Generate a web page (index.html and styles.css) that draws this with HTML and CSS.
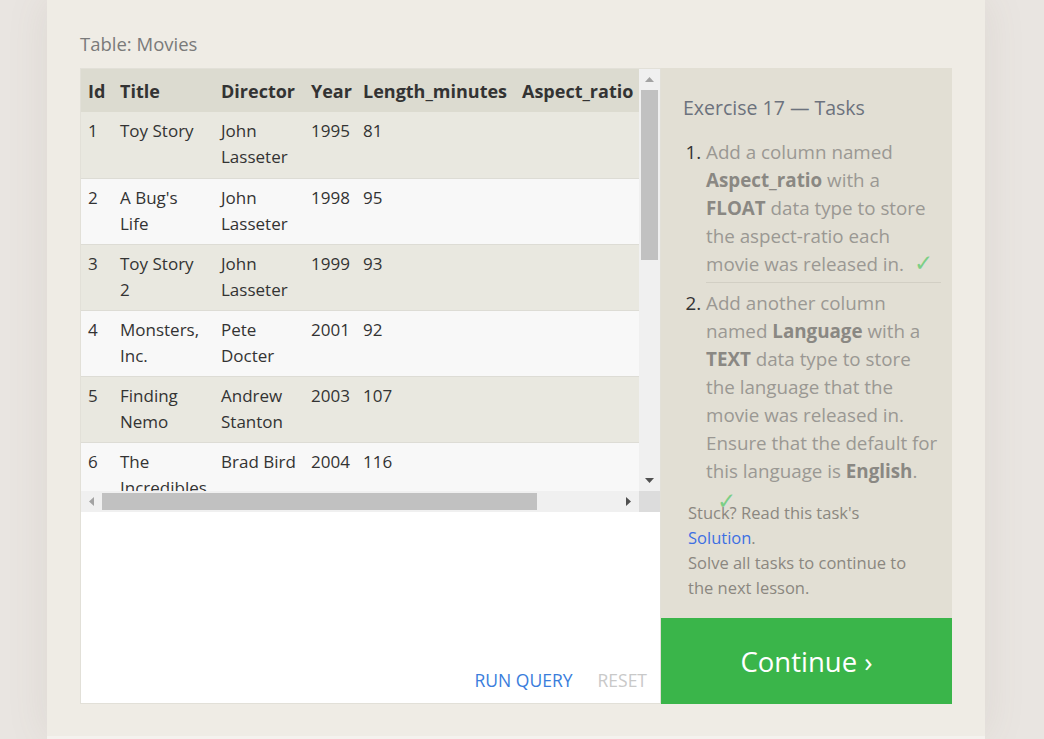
FILE: index.html
```html
<!DOCTYPE html>
<html lang="en">
<head>
<meta charset="utf-8">
<title>Exercise 17</title>
<link rel="stylesheet" href="styles.css">
</head>
<body>
<div class="page">
  <div class="card">
    <div class="label">Table: Movies</div>
    <div class="workspace">
      <div class="left">
        <div class="results">
          <div class="viewport">
            <table class="movies">
              <colgroup>
                <col class="c-id"><col class="c-title"><col class="c-dir"><col class="c-year"><col class="c-len"><col class="c-asp">
              </colgroup>
              <thead>
                <tr><th>Id</th><th>Title</th><th>Director</th><th>Year</th><th>Length_minutes</th><th>Aspect_ratio</th></tr>
              </thead>
              <tbody>
                <tr><td>1</td><td class="t">Toy Story</td><td>John Lasseter</td><td>1995</td><td>81</td><td></td></tr>
                <tr><td>2</td><td class="t">A Bug's Life</td><td>John Lasseter</td><td>1998</td><td>95</td><td></td></tr>
                <tr><td>3</td><td class="t">Toy Story 2</td><td>John Lasseter</td><td>1999</td><td>93</td><td></td></tr>
                <tr><td>4</td><td class="t">Monsters, Inc.</td><td>Pete Docter</td><td>2001</td><td>92</td><td></td></tr>
                <tr><td>5</td><td class="t">Finding Nemo</td><td>Andrew Stanton</td><td>2003</td><td>107</td><td></td></tr>
                <tr><td>6</td><td class="t">The Incredibles</td><td>Brad Bird</td><td>2004</td><td>116</td><td></td></tr>
              </tbody>
            </table>
          </div>
          <div class="vscroll">
            <div class="arrow"><svg width="9" height="5" viewBox="0 0 9 5"><polygon points="0,5 9,5 4.5,0" fill="#a3a3a3"/></svg></div>
            <div class="vthumb-wrap"><div class="vthumb"></div></div>
            <div class="arrow"><svg width="9" height="5" viewBox="0 0 9 5"><polygon points="0,0 9,0 4.5,5" fill="#505050"/></svg></div>
          </div>
          <div class="hscroll">
            <div class="harrow"><svg width="5" height="9" viewBox="0 0 5 9"><polygon points="5,0 5,9 0,4.5" fill="#a3a3a3"/></svg></div>
            <div class="hthumb-wrap"><div class="hthumb"></div></div>
            <div class="harrow"><svg width="5" height="9" viewBox="0 0 5 9"><polygon points="0,0 0,9 5,4.5" fill="#505050"/></svg></div>
          </div>
          <div class="corner"></div>
        </div>
        <div class="actions">
          <span class="run">RUN QUERY</span>
          <span class="reset">RESET</span>
        </div>
      </div>
      <div class="right">
        <div class="tasks">
          <div class="title">Exercise 17 — Tasks</div>
          <ol class="list">
            <li class="task first"><span class="txt">Add a column named <b>Aspect_ratio</b> with a <b>FLOAT</b> data type to store the aspect-ratio each movie was released in.</span><span class="check">✓</span></li>
            <li class="task"><span class="txt">Add another column named <b>Language</b> with a <b>TEXT</b> data type to store the language that the movie was released in. Ensure that the default for this language is <b>English</b>.</span><div class="check-line"><span class="check">✓</span></div></li>
          </ol>
          <p class="stuck">Stuck? Read this task's <span class="link">Solution</span>.<br>Solve all tasks to continue to the next lesson.</p>
        </div>
        <div class="continue">Continue ›</div>
      </div>
    </div>
  </div>
  <div class="below"></div>
</div>
</body>
</html>
```

FILE: styles.css
```css
html, body {
  margin: 0;
  padding: 0;
}
body {
  background: #e9e5e1;
  font-family: "Open Sans", "Noto Sans", sans-serif;
  height: 739px;
  overflow: hidden;
}
.page {
  width: 938px;
  margin-left: 47px;
}
.card {
  background: #efece5;
  padding: 33px 33px 32px 33px;
  box-shadow: 0 0 40px rgba(120, 100, 80, 0.10);
}
.below {
  height: 20px;
  background: #f4f2ee;
}
.label {
  font-size: 18.5px;
  line-height: 22px;
  color: #7a7a7a;
  margin-bottom: 13px;
}
.workspace {
  display: flex;
  height: 636px;
}
.left {
  width: 581px;
  box-sizing: border-box;
  border: 1px solid #e2e0d8;
  background: #ffffff;
  display: flex;
  flex-direction: column;
}
.results {
  display: grid;
  grid-template-columns: 558px 21px;
  grid-template-rows: 422px 21px;
}
.viewport {
  overflow: hidden;
  background: #f8f8f8;
}
.movies {
  border-collapse: collapse;
  table-layout: fixed;
  width: 620px;
  font-size: 17px;
  color: #333;
}
.c-id { width: 32px; }
.c-title { width: 101px; }
.c-dir { width: 90px; }
.c-year { width: 52px; }
.c-len { width: 159px; }
.c-asp { width: 186px; }
.movies th {
  background: #dcdbd0;
  text-align: left;
  font-weight: 700;
  font-size: 18px;
  height: 43px;
  box-sizing: border-box;
  padding: 1px 4px 0 7px;
  white-space: nowrap;
  line-height: 26px;
}
.movies td {
  height: 66px;
  box-sizing: border-box;
  padding: 6px 4px 7px 7px;
  vertical-align: top;
  line-height: 26px;
  border-bottom: 1px solid #dddcd5;
}
.movies td.t {
  padding-right: 13px;
}
.movies tbody tr:nth-child(odd) td { background: #e9e8e0; }
.movies tbody tr:nth-child(even) td { background: #f8f8f8; }

.vscroll {
  background: #f0f0f0;
  display: flex;
  flex-direction: column;
}
.arrow {
  height: 21px;
  display: flex;
  align-items: center;
  justify-content: center;
}
.vthumb-wrap {
  flex: 1;
  padding: 0 2px;
}
.vthumb {
  height: 170px;
  background: #c1c1c1;
}
.hscroll {
  background: #f0f0f0;
  display: flex;
  align-items: stretch;
}
.harrow {
  width: 21px;
  display: flex;
  align-items: center;
  justify-content: center;
}
.hthumb-wrap {
  flex: 1;
  padding: 2px 0;
}
.hthumb {
  height: 100%;
  width: 435px;
  background: #c1c1c1;
}
.corner {
  background: #dcdcdc;
}
.actions {
  flex: 1;
  display: flex;
  justify-content: flex-end;
  align-items: flex-end;
  gap: 25px;
  padding: 0 13px 11px 0;
  font-size: 17.5px;
  line-height: 24px;
}
.run { color: #3a7ddc; }
.reset { color: #c9c9c9; }

.right {
  width: 291px;
  display: flex;
  flex-direction: column;
}
.tasks {
  flex: 1;
  background: #e2dfd4;
  padding: 27px 11px 0 22px;
}
.title {
  font-size: 19.5px;
  line-height: 26px;
  color: #6c727d;
}
.list {
  margin: 17px 0 0 0;
  padding: 0 0 0 23px;
  font-size: 18.8px;
  line-height: 28px;
}
.task {
  color: #333;
}
.task::marker {
  color: #333;
}
.task .txt {
  color: #9a9893;
}
.task b {
  color: #8a8883;
}
.task.first {
  border-bottom: 1px solid #d2cfc4;
  padding-bottom: 4px;
  margin-bottom: 6px;
}
.check {
  color: #7ccf86;
  margin-left: 10px;
  font-size: 23px;
  line-height: 20px;
  font-family: "DejaVu Sans", sans-serif;
  font-weight: 300;
}
.check-line {
  height: 0;
  line-height: 28px;
  padding-top: 3px;
}
.check-line .check {
  margin-left: 11px;
}
.stuck {
  width: 228px;
  margin: 12px 0 0 5px;
  font-size: 16.5px;
  line-height: 25px;
  color: #8b8780;
}
.link { color: #3d6fe2; }
.continue {
  height: 86px;
  background: #3ab54a;
  color: #ffffff;
  font-size: 27.5px;
  display: flex;
  align-items: center;
  justify-content: center;
}
```
